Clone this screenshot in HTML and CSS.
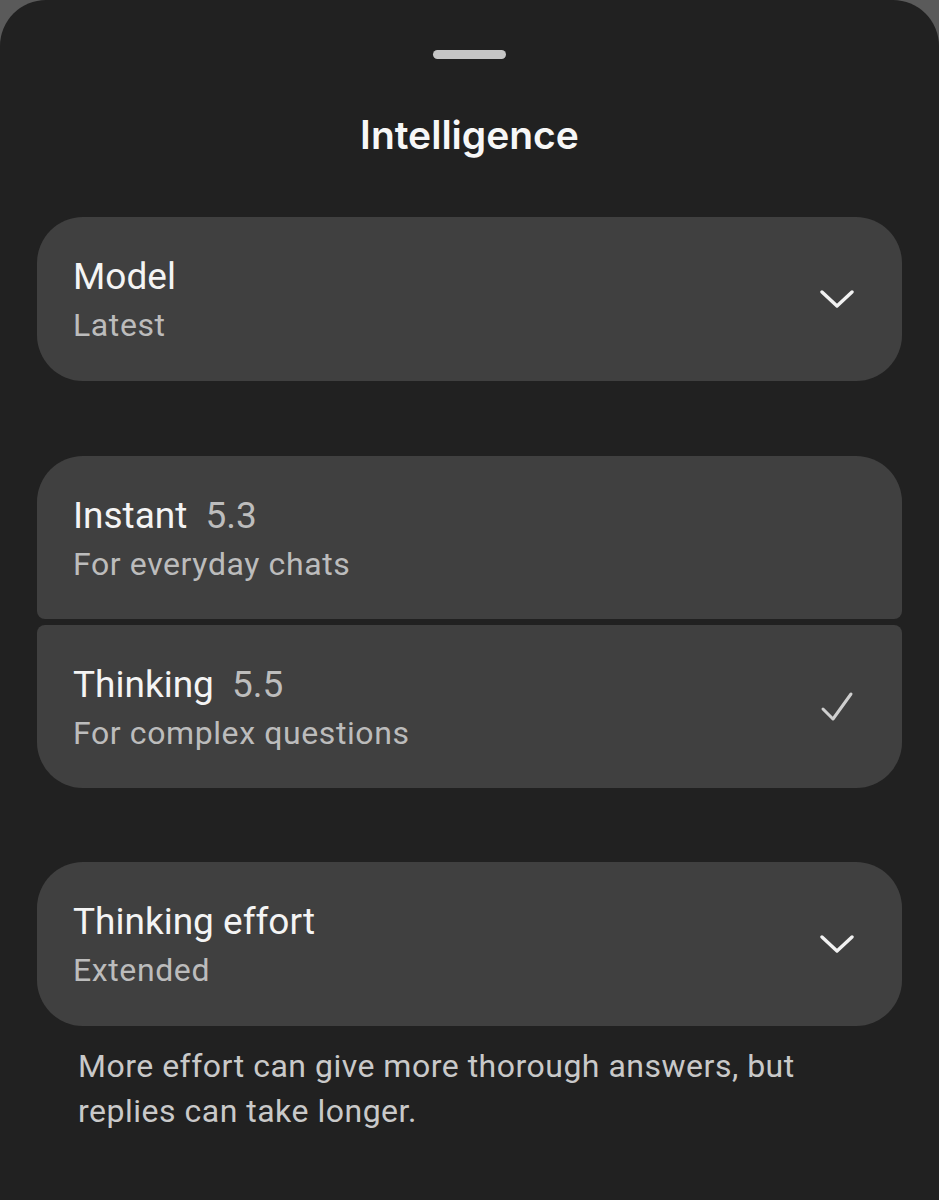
FILE: index.html
```html
<!DOCTYPE html>
<html lang="en">
<head>
  <meta charset="UTF-8" />
  <title>Intelligence</title>
  <meta name="viewport" content="width=device-width, initial-scale=1.0" />
  <link rel="stylesheet" href="styles.css">
</head>
<body>
  <div class="sheet">
    <div class="handle"></div>
    <h1 class="sheet-title">Intelligence</h1>

    <div class="card">
      <div class="card-text">
        <div class="card-title">Model</div>
        <div class="card-sub">Latest</div>
      </div>
      <svg class="icon" viewBox="0 0 34 18" width="34" height="18">
        <path d="M2 2 L17 16 L32 2" fill="none" stroke="#f2f2f2" stroke-width="3.4" stroke-linecap="round" stroke-linejoin="round"/>
      </svg>
    </div>

    <div class="group">
      <div class="card card-top">
        <div class="card-text">
          <div class="card-title">Instant <span class="ver">5.3</span></div>
          <div class="card-sub">For everyday chats</div>
        </div>
      </div>
      <div class="card card-bottom">
        <div class="card-text">
          <div class="card-title">Thinking <span class="ver">5.5</span></div>
          <div class="card-sub">For complex questions</div>
        </div>
        <svg class="icon" viewBox="0 0 34 32" width="34" height="32">
          <path d="M3 18 L13 28 L31 3" fill="none" stroke="#cfcfcf" stroke-width="3" stroke-linecap="round" stroke-linejoin="round"/>
        </svg>
      </div>
    </div>

    <div class="card">
      <div class="card-text">
        <div class="card-title">Thinking effort</div>
        <div class="card-sub">Extended</div>
      </div>
      <svg class="icon" viewBox="0 0 34 18" width="34" height="18">
        <path d="M2 2 L17 16 L32 2" fill="none" stroke="#f2f2f2" stroke-width="3.4" stroke-linecap="round" stroke-linejoin="round"/>
      </svg>
    </div>

    <p class="note">More effort can give more thorough answers, but replies can take longer.</p>
  </div>
</body>
</html>
```

FILE: styles.css
```css
* {
  box-sizing: border-box;
  margin: 0;
  padding: 0;
}
body {
  background-color: #5a5a5a;
  font-family: 'Roboto', sans-serif;
}
.sheet {
  background: #212121;
  border-radius: 46px 46px 0 0;
  min-height: 1200px;
  padding: 50px 37px 40px;
}
.handle {
  width: 73px;
  height: 9px;
  border-radius: 5px;
  background: #c6c6c6;
  margin: 0 auto;
}
.sheet-title {
  font-family: 'Inter', sans-serif;
  font-weight: 600;
  font-size: 39px;
  line-height: 46px;
  color: #f7f7f7;
  text-align: center;
  margin-top: 53px;
  margin-bottom: 59px;
}
.card {
  background: #404040;
  border-radius: 46px;
  height: 164px;
  padding: 37px 48px 0 36px;
  display: flex;
  align-items: center;
  justify-content: space-between;
}
.card-text {
  align-self: flex-start;
}
.card-title {
  font-size: 37px;
  line-height: 46px;
  color: #f4f4f4;
}
.ver {
  color: #bdbdbd;
  margin-left: 9px;
}
.card-sub {
  font-size: 32px;
  line-height: 46px;
  color: #bcbcbc;
  letter-spacing: 0.6px;
  margin-top: 2px;
}
.icon {
  margin-top: -37px;
}
.group {
  margin: 75px 0 74px;
  display: flex;
  flex-direction: column;
  gap: 6px;
}
.group .card {
  height: 163px;
}
.card-top {
  border-radius: 46px 46px 8px 8px;
}
.card-bottom {
  border-radius: 8px 8px 46px 46px;
}
.note {
  font-size: 32px;
  line-height: 45px;
  color: #c9c9c9;
  letter-spacing: 0.5px;
  padding: 18px 0 0 41px;
  max-width: 800px;
}
```
